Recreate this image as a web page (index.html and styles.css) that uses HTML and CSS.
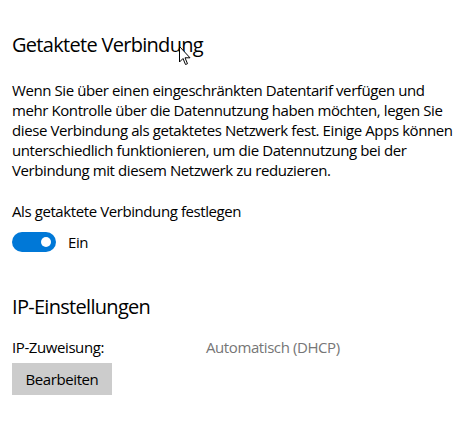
FILE: index.html
```html
<!DOCTYPE html>
<html lang="de">
<head>
<meta charset="utf-8">
<link rel="stylesheet" href="styles.css">
</head>
<body>
<div class="page">
  <h2 class="heading first">Getaktete Verbindung</h2>
  <p class="desc">Wenn Sie über einen eingeschränkten Datentarif verfügen und<br>mehr Kontrolle über die Datennutzung haben möchten, legen Sie<br>diese Verbindung als getaktetes Netzwerk fest. Einige Apps können<br>unterschiedlich funktionieren, um die Datennutzung bei der<br>Verbindung mit diesem Netzwerk zu reduzieren.</p>
  <div class="label">Als getaktete Verbindung festlegen</div>
  <div class="toggle-row">
    <span class="toggle"><span class="knob"></span></span>
    <span class="toggle-text">Ein</span>
  </div>
  <h2 class="heading second">IP-Einstellungen</h2>
  <div class="kv">
    <span class="key">IP-Zuweisung:</span>
    <span class="value">Automatisch (DHCP)</span>
  </div>
  <button class="btn">Bearbeiten</button>
  <svg class="cursor" width="13" height="20" viewBox="0 0 13 20"><path d="M0.5 0.5 L0.5 16 L4 12.5 L6.5 18.5 L8.5 17.7 L6 11.8 L11 11.8 Z" fill="#fff" stroke="#000" stroke-width="1"/></svg>
</div>
</body>
</html>
```
FILE: styles.css
```css
html, body { margin: 0; padding: 0; background: #fff; overflow: hidden; }
body { font-family: "Open Sans", "Noto Sans", sans-serif; color: #000; }
.page { position: relative; padding: 0 0 0 12px; width: 462px; box-sizing: border-box; height: 421px; }
.heading { font-weight: 400; font-size: 20px; margin: 0; line-height: 26px; letter-spacing: -0.7px; }
.heading.first { padding-top: 31.5px; }
.desc { font-size: 15px; line-height: 20px; margin: 22px 0 0; letter-spacing: -0.41px; white-space: nowrap; }
.label { font-size: 15px; line-height: 20px; margin-top: 21px; letter-spacing: -0.41px; }
.toggle-row { display: flex; align-items: center; gap: 12px; margin-top: 11.5px; height: 20px; }
.toggle { width: 44px; height: 20px; border-radius: 10px; background: #0078d7; position: relative; display: inline-block; flex: none; }
.knob { position: absolute; width: 10px; height: 10px; border-radius: 50%; background: #fff; right: 5px; top: 5px; }
.toggle-text { font-size: 15px; line-height: 20px; letter-spacing: -0.41px; }
.heading.second { margin-top: 41.5px; }
.kv { display: flex; margin-top: 17.7px; font-size: 15px; line-height: 20px; letter-spacing: -0.41px; }
.key { width: 194px; flex: none; }
.value { color: #767676; }
.btn { display: block; margin-top: 5.5px; width: 100px; height: 32px; background: #cccccc; border: none; font-family: inherit; font-size: 15px; color: #000; padding: 0; letter-spacing: -0.41px; }
.cursor { position: absolute; left: 179px; top: 46px; }
```
